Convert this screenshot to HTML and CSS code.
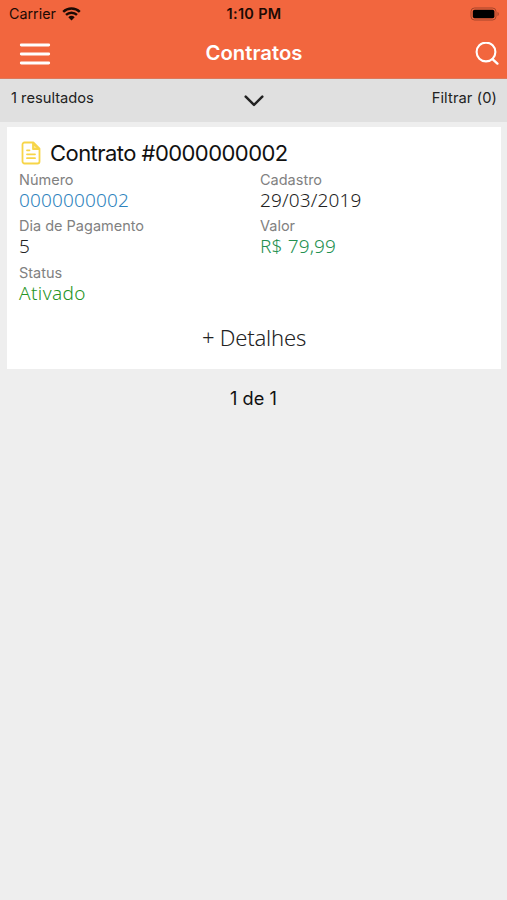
FILE: index.html
```html
<!DOCTYPE html>
<html lang="pt-BR">
<head>
    <meta charset="UTF-8">
    <meta name="viewport" content="width=device-width, initial-scale=1.0">
    <title>Contratos</title>
    <link rel="stylesheet" href="styles.css">
</head>
<body>
    <header class="header">
        <div class="status-bar">
            <div class="carrier">
                <span class="carrier-name">Carrier</span>
                <svg class="wifi" viewBox="0 0 19 14" width="19" height="14">
                    <path d="M1.2 4.8a12 12 0 0 1 16.6 0M4 7.9a8 8 0 0 1 11 0" fill="none" stroke="#1c0a04" stroke-width="2.4"/>
                    <path d="M6.3 10.3a4.8 4.8 0 0 1 6.4 0L9.5 13.6z" fill="#1c0a04"/>
                </svg>
            </div>
            <span class="time">1:10 PM</span>
            <svg class="battery" viewBox="0 0 30 14" width="30" height="14">
                <rect x="1" y="1" width="25" height="12" rx="3.5" fill="none" stroke="#a5452a"/>
                <rect x="2.8" y="2.8" width="21.6" height="8.4" rx="1.8" fill="#000"/>
                <path d="M27.5 5v4c1.7-.5 1.7-3.5 0-4z" fill="#a5452a"/>
            </svg>
        </div>
        <nav class="navbar">
            <svg class="menu" viewBox="0 0 32 24" width="32" height="24">
                <path d="M2.3 3h27.4M2.3 12h27.4M2.3 21h27.4" stroke="#fff" stroke-width="2.9" stroke-linecap="round"/>
            </svg>
            <h1 class="page-title">Contratos</h1>
            <svg class="search" viewBox="0 0 24 24" width="24" height="24">
                <path d="M17.5 17.2l4.9 4.4" stroke="#fff" stroke-width="2.4" stroke-linecap="round"/>
                <circle cx="11" cy="10" r="9.4" fill="none" stroke="#fff" stroke-width="2.1"/>
            </svg>
        </nav>
    </header>

    <div class="filter-bar">
        <span class="results">1 resultados</span>
        <svg class="chevron" viewBox="0 0 20 12" width="20" height="12">
            <path d="M1.7 1.7l8.3 8.2 8.3-8.2" fill="none" stroke="#222" stroke-width="2.5" stroke-linecap="round" stroke-linejoin="round"/>
        </svg>
        <span class="filter">Filtrar (0)</span>
    </div>

    <main>
        <article class="card">
            <h2 class="card-title">
                <svg class="doc" viewBox="0 0 20 24" width="20" height="24">
                    <g fill="none" stroke="#f7d548" stroke-width="1.8" stroke-linejoin="round" stroke-linecap="round">
                        <path d="M3.5 1.5h8.8l6.2 6.2v12.8a2 2 0 0 1-2 2h-13a2 2 0 0 1-2-2v-17a2 2 0 0 1 2-2z"/>
                        <path d="M12 2v6h6z" fill="#fbe68e"/>
                        <path d="M6 9.3h2.5M6 13.3h8M6 17.2h8"/>
                    </g>
                </svg>
                <span>Contrato #0000000002</span>
            </h2>
            <dl class="fields">
                <div class="field">
                    <dt>Número</dt>
                    <dd class="number">0000000002</dd>
                </div>
                <div class="field">
                    <dt>Cadastro</dt>
                    <dd>29/03/2019</dd>
                </div>
                <div class="field">
                    <dt>Dia de Pagamento</dt>
                    <dd>5</dd>
                </div>
                <div class="field">
                    <dt>Valor</dt>
                    <dd class="value">R$ 79,99</dd>
                </div>
                <div class="field">
                    <dt>Status</dt>
                    <dd class="active">Ativado</dd>
                </div>
            </dl>
            <a class="details">+ Detalhes</a>
        </article>
        <p class="pagination">1 de 1</p>
    </main>
</body>
</html>
```

FILE: styles.css
```css
* {
    margin: 0;
    padding: 0;
    box-sizing: border-box;
}

body {
    font-family: Inter, "Liberation Sans", sans-serif;
    background: #eeeeee;
    color: #111;
    min-height: 100vh;
}

svg {
    display: block;
}

.header {
    height: 79px;
    background: #f2663e;
    border-bottom: 1px solid #dc795c;
}

.status-bar {
    display: grid;
    grid-template-columns: 1fr auto 1fr;
    align-items: center;
    height: 27px;
    padding: 0 7px 0 9px;
    color: #1c0a04;
    font-size: 14.3px;
    line-height: 28px;
}

.carrier {
    display: flex;
    align-items: center;
    gap: 6px;
}

.time {
    font-size: 14.5px;
    font-weight: 600;
    letter-spacing: 0.3px;
    padding-right: 1px;
}

.battery {
    justify-self: end;
}

.navbar {
    display: grid;
    grid-template-columns: 1fr auto 1fr;
    align-items: center;
    height: 52px;
    padding: 1px 8px 0 19px;
}

.navbar .search {
    justify-self: end;
}

.page-title {
    color: #fff;
    font-size: 20.3px;
    font-weight: 600;
    line-height: 50px;
    padding-bottom: 2px;
    padding-right: 10px;
}

.filter-bar {
    display: grid;
    grid-template-columns: 1fr auto 1fr;
    height: 43px;
    padding: 0 10px 0 11px;
    background: #e0e0e0;
    font-size: 14.7px;
    line-height: 38px;
    color: #222;
}

.chevron {
    margin-top: 16px;
}

.filter {
    text-align: right;
    letter-spacing: 0.1px;
}

.card {
    height: 242px;
    margin: 5px 6px 0 7px;
    padding: 11px 12px 0;
    background: #fff;
}

.card-title {
    display: flex;
    align-items: center;
    gap: 9px;
    height: 30px;
    padding-left: 2px;
    font-size: 22px;
    font-weight: 400;
    letter-spacing: -0.55px;
    line-height: 30px;
}

.fields {
    display: grid;
    grid-template-columns: 241px 1fr;
    grid-auto-rows: 46.3px;
    padding-top: 3px;
}

.field dt {
    font-size: 14.5px;
    line-height: 18px;
    color: #818181;
}

.field dd {
    font-family: "Noto Sans", "Open Sans", sans-serif;
    font-size: 19px;
    font-weight: 300;
    letter-spacing: 0.15px;
    line-height: 22px;
    color: #222;
}

.field .number {
    color: #2e83bd;
}

.field .value {
    color: #23904f;
}

.field .active {
    color: #259425;
    letter-spacing: 0.4px;
}

.details {
    display: block;
    margin-top: 11px;
    font-family: "Noto Sans", "Open Sans", sans-serif;
    font-size: 22px;
    font-weight: 300;
    letter-spacing: -0.2px;
    line-height: 32px;
    text-align: center;
    color: #222;
}

.pagination {
    margin-top: 18px;
    font-size: 18.2px;
    line-height: 23px;
    text-align: center;
}
```
